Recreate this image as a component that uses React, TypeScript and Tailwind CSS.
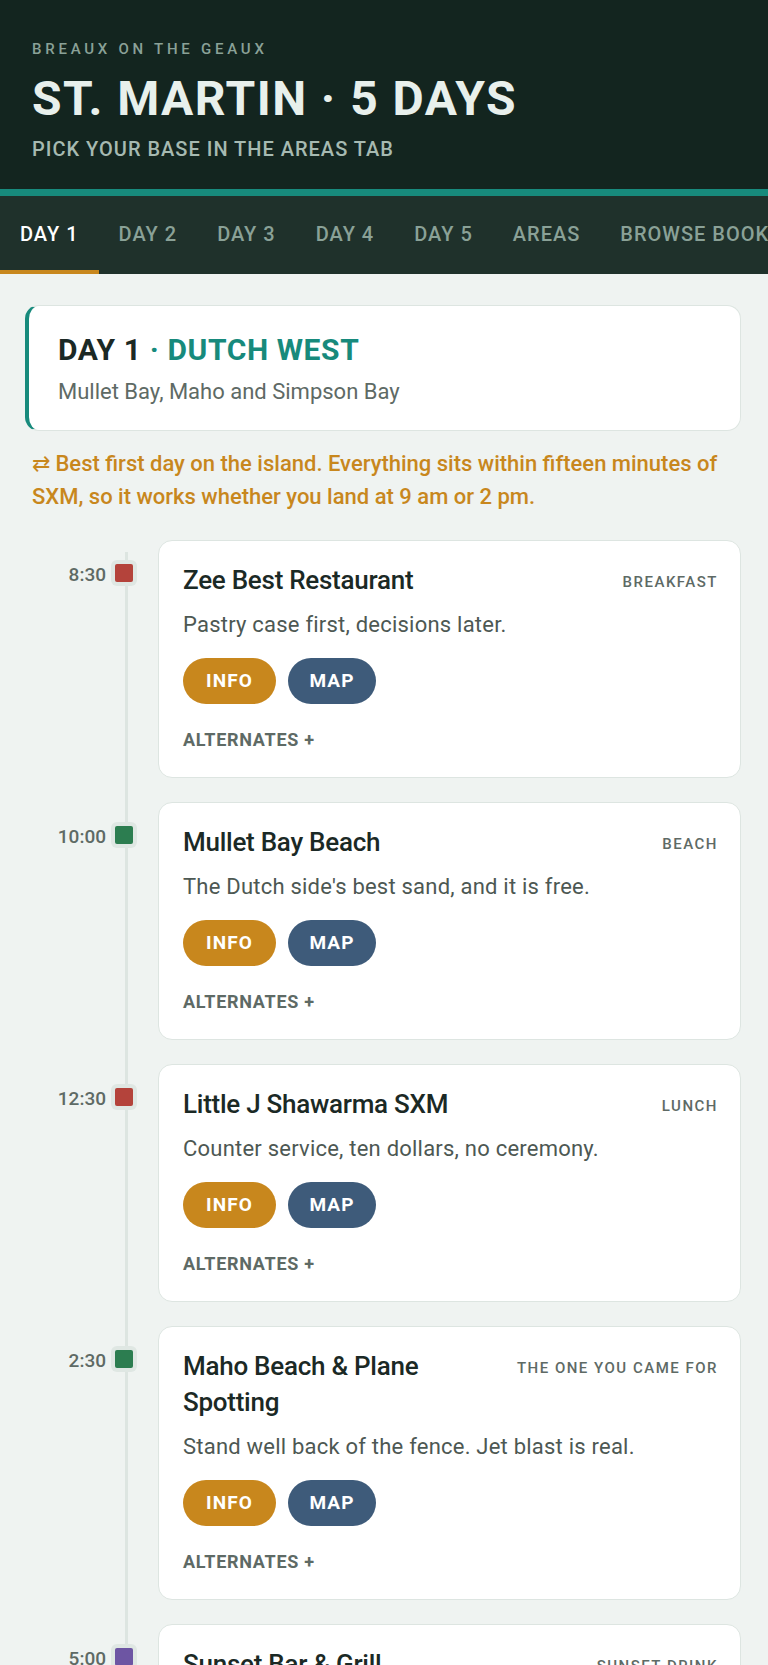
import React from "react";

type Stop = {
  time: string;
  dot: string;
  name: string;
  tag: string;
  blurb: string;
};

const stops: Stop[] = [
  { time: "8:30", dot: "bg-[#b4433b]", name: "Zee Best Restaurant", tag: "BREAKFAST", blurb: "Pastry case first, decisions later." },
  { time: "10:00", dot: "bg-[#2c7d50]", name: "Mullet Bay Beach", tag: "BEACH", blurb: "The Dutch side's best sand, and it is free." },
  { time: "12:30", dot: "bg-[#b4433b]", name: "Little J Shawarma SXM", tag: "LUNCH", blurb: "Counter service, ten dollars, no ceremony." },
  { time: "2:30", dot: "bg-[#2c7d50]", name: "Maho Beach & Plane Spotting", tag: "THE ONE YOU CAME FOR", blurb: "Stand well back of the fence. Jet blast is real." },
  { time: "5:00", dot: "bg-[#6d55a3]", name: "Sunset Bar & Grill", tag: "SUNSET DRINK", blurb: "Grab a rail seat early and watch the last landings." },
];

const tabs = ["DAY 1", "DAY 2", "DAY 3", "DAY 4", "DAY 5", "AREAS", "BROWSE BOOKINGS"];

function StopCard({ stop }: { stop: Stop }) {
  return (
    <div className="flex items-start">
      <div className="flex items-start pt-[20px] shrink-0">
        <div className="w-[81px] text-right text-[19px] font-medium text-[#5e6a65] leading-[30px]">{stop.time}</div>
        <div className="ml-[5px] w-[26px] h-[26px] rounded-[6px] bg-[#dfe7e3] flex items-center justify-center">
          <div className={`w-[18px] h-[18px] rounded-[2px] ${stop.dot}`} />
        </div>
      </div>
      <div className="ml-[21px] flex-1 bg-white border-[1.5px] border-[#dde5e1] rounded-[14px] pl-6 pr-[22px] pt-[21px] pb-[25px]">
        <div className="flex items-start justify-between gap-6">
          <h3 className="text-[26px] font-medium leading-[36px] text-[#1b2925] tracking-[-0.01em]">{stop.name}</h3>
          <span className="shrink-0 pt-[9px] text-[15px] font-medium tracking-[0.1em] text-[#5e6a65]">{stop.tag}</span>
        </div>
        <p className="mt-[12px] text-[22px] leading-[30px] text-[#4d5853] tracking-[0.01em]">{stop.blurb}</p>
        <div className="mt-[18px] flex gap-[12px]">
          <button className="h-[46px] w-[93px] rounded-full bg-[#c8871d] text-white text-[19px] font-bold tracking-[0.06em]">INFO</button>
          <button className="h-[46px] w-[88px] rounded-full bg-[#3e5b7a] text-white text-[19px] font-bold tracking-[0.06em]">MAP</button>
        </div>
        <div className="mt-[24px] text-[18px] leading-[24px] font-bold tracking-[0.04em] text-[#5e6a65]">ALTERNATES +</div>
      </div>
    </div>
  );
}

export default function App() {
  return (
    <div className="min-h-screen bg-[#eff3f1] font-['Roboto','Liberation_Sans',sans-serif]">
      <header className="bg-[#13251f] px-8 pt-[40px] pb-[27px] border-b-[7px] border-[#178a7c]">
        <div className="text-[15px] font-medium tracking-[0.25em] text-[#8aa197] leading-[18px]">BREAUX ON THE GEAUX</div>
        <h1 className="mt-[12px] text-[48px] font-bold leading-[58px] tracking-[0.03em] text-[#e8f0ec]">ST. MARTIN · 5 DAYS</h1>
        <div className="mt-[8px] text-[20px] font-medium tracking-[0.05em] leading-[26px] text-[#a6bab1]">PICK YOUR BASE IN THE AREAS TAB</div>
      </header>

      <nav className="bg-[#1f312b] flex overflow-hidden whitespace-nowrap h-[78px]">
        {tabs.map((t, i) => (
          <div
            key={t}
            className={`shrink-0 px-[20px] pt-[2px] flex items-center text-[20px] font-medium tracking-[0.05em] border-b-4 ${
              i === 0 ? "text-white border-[#c8871d]" : "text-[#8aa197] border-transparent"
            }`}
          >
            {t}
          </div>
        ))}
      </nav>

      <main className="pl-[25px] pr-[27px] pt-[31px] pb-10">
        <section className="bg-white border-[1.5px] border-[#dde5e1] border-l-4 border-l-[#178a7c] rounded-[14px] pl-[29px] pt-[26px] pb-[24px]">
          <h2 className="text-[30px] font-bold leading-[36px] tracking-[0.02em] text-[#1b2925]">
            DAY 1 <span className="text-[#178a7c]">· DUTCH WEST</span>
          </h2>
          <p className="mt-[10px] text-[22px] leading-[28px] text-[#5e6a65]">Mullet Bay, Maho and Simpson Bay</p>
        </section>

        <p className="mt-[16px] pl-[7px] text-[22px] font-medium leading-[33px] text-[#c8871d]">
          ⇄ Best first day on the island. Everything sits within fifteen minutes of SXM, so it works whether you land at 9 am or 2 pm.
        </p>

        <div className="relative mt-[27px]">
          <div className="absolute left-[100px] top-[12px] bottom-0 w-[3px] bg-[#dde5e1]" />
          <div className="relative flex flex-col gap-6">
            {stops.map((s) => (
              <StopCard key={s.time} stop={s} />
            ))}
          </div>
        </div>
      </main>
    </div>
  );
}
